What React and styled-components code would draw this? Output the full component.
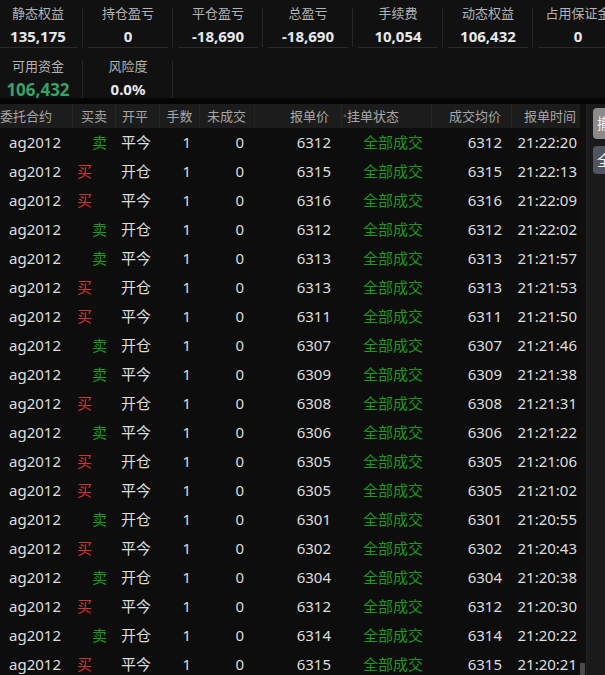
import React from 'react';
import styled, { createGlobalStyle, css } from 'styled-components';

const GlobalStyle = createGlobalStyle`
  html, body {
    margin: 0;
    padding: 0;
    background: #0c0c0c;
    overflow: hidden;
  }
  body {
    font-family: "Noto Sans", "Noto Sans CJK SC", sans-serif;
  }
`;

const GREEN = '#1f9a1f';
const RED = '#d4362f';

const COLUMNS = '73px 43px 44px 40px 55px 87px 90px 80px 68px';

const summaryTop = [
  { label: '静态权益', value: '135,175' },
  { label: '持仓盈亏', value: '0' },
  { label: '平仓盈亏', value: '-18,690' },
  { label: '总盈亏', value: '-18,690' },
  { label: '手续费', value: '10,054' },
  { label: '动态权益', value: '106,432' },
  { label: '占用保证金', value: '0' },
];

const summaryBottom = [
  { label: '可用资金', value: '106,432', accent: true },
  { label: '风险度', value: '0.0%' },
];

const orders = [
  [ 'sell', '平今', 6312, '21:22:20' ],
  [ 'buy', '开仓', 6315, '21:22:13' ],
  [ 'buy', '平今', 6316, '21:22:09' ],
  [ 'sell', '开仓', 6312, '21:22:02' ],
  [ 'sell', '平今', 6313, '21:21:57' ],
  [ 'buy', '开仓', 6313, '21:21:53' ],
  [ 'buy', '平今', 6311, '21:21:50' ],
  [ 'sell', '开仓', 6307, '21:21:46' ],
  [ 'sell', '平今', 6309, '21:21:38' ],
  [ 'buy', '开仓', 6308, '21:21:31' ],
  [ 'sell', '平今', 6306, '21:21:22' ],
  [ 'buy', '开仓', 6305, '21:21:06' ],
  [ 'buy', '平今', 6305, '21:21:02' ],
  [ 'sell', '开仓', 6301, '21:20:55' ],
  [ 'buy', '平今', 6302, '21:20:43' ],
  [ 'sell', '开仓', 6304, '21:20:38' ],
  [ 'buy', '平今', 6312, '21:20:30' ],
  [ 'sell', '开仓', 6314, '21:20:22' ],
  [ 'buy', '平今', 6315, '21:20:21' ],
];

const headers = [
  { text: '委托合约', align: 'left', pad: '0 0 0 0' },
  { text: '买卖', align: 'center', pad: '0' },
  { text: '开平', align: 'left', pad: '0 0 0 6px' },
  { text: '手数', align: 'center', pad: '0' },
  { text: '未成交', align: 'left', pad: '0 0 0 7px' },
  { text: '报单价', align: 'right', pad: '0 12px 0 0' },
  { text: '挂单状态', align: 'left', pad: '0 0 0 5px', sort: true },
  { text: '成交均价', align: 'right', pad: '0 10px 0 0' },
  { text: '报单时间', align: 'right', pad: '0 4px 0 0' },
];

export default function App () {
  return (
    <>
      <GlobalStyle />
      <Page>
        <Summary>
          <SummaryRow top>
            { summaryTop.map( item => (
              <Stat key={ item.label } top>
                <StatLabel top>{ item.label }</StatLabel>
                <StatValue top>{ item.value }</StatValue>
              </Stat>
            ) ) }
          </SummaryRow>
          <SummaryRow>
            { summaryBottom.map( item => (
              <Stat key={ item.label }>
                <StatLabel>{ item.label }</StatLabel>
                <StatValue accent={ item.accent }>{ item.value }</StatValue>
              </Stat>
            ) ) }
          </SummaryRow>
        </Summary>

        <Band />

        <Main>
          <Table>
            <HeadRow>
              { headers.map( h => (
                <HeadCell key={ h.text } align={ h.align } pad={ h.pad }>
                  { h.sort && <SortMark /> }
                  { h.text }
                </HeadCell>
              ) ) }
            </HeadRow>
            { orders.map( ( [ side, offset, price, time ], i ) => (
              <Row key={ i }>
                <Cell align='left' pad='0 0 0 9px'>ag2012</Cell>
                { side === 'buy'
                  ? <Cell align='left' pad='0 0 0 4px' color={ RED }>买</Cell>
                  : <Cell align='right' pad='0 9px 0 0' color={ GREEN }>卖</Cell> }
                <Cell align='left' pad='0 0 0 5px'>{ offset }</Cell>
                <Cell align='right' pad='0 9px 0 0'>1</Cell>
                <Cell align='right' pad='0 11px 0 0'>0</Cell>
                <Cell align='right' pad='0 11px 0 0'>{ price }</Cell>
                <Cell align='left' pad='0 0 0 21px' color={ GREEN }>全部成交</Cell>
                <Cell align='right' pad='0 10px 0 0'>{ price }</Cell>
                <Cell align='right' pad='0 3px 0 0'>{ time }</Cell>
              </Row>
            ) ) }
          </Table>

          <ScrollTrack>
            <Thumb />
          </ScrollTrack>

          <SidePanel>
            <SideButton variant='light'>撤单</SideButton>
            <SideButton variant='dark'>全撤</SideButton>
          </SidePanel>
        </Main>
      </Page>
    </>
  );
}

const Page = styled.div`
  width: 605px;
  height: 675px;
  display: flex;
  flex-direction: column;
  overflow: hidden;
  background: #0c0c0c;
`;

const Summary = styled.div`
  height: 98px;
  background: #111111;
  overflow: hidden;
  display: flex;
  flex-direction: column;
`;

const SummaryRow = styled.div`
  display: flex;
  height: ${ props => props.top ? 53 : 45 }px;
  margin-left: -7px;
`;

const Stat = styled.div`
  position: relative;
  flex: 0 0 90px;
  display: flex;
  flex-direction: column;
  align-items: center;

  &::after {
    content: '';
    position: absolute;
    right: 0;
    top: ${ props => props.top ? 8 : 7 }px;
    height: ${ props => props.top ? 39 : 38 }px;
    width: 1px;
    background: #262626;
  }
`;

const StatLabel = styled.div`
  margin-top: 3px;
  line-height: 20px;
  font-size: 13px;
  color: #b4b4b4;
  white-space: nowrap;
`;

const StatValue = styled.div`
  align-self: stretch;
  text-align: center;
  font-weight: 700;
  white-space: nowrap;
  color: ${ props => props.accent ? '#3aa267' : '#e6e8ec' };
  ${ props => props.top ? css`
    margin: 3px 5px 0;
    line-height: 21px;
    font-size: 15px;
    border-bottom: 1px solid #2a2a2a;
  ` : css`
    margin-top: 2px;
    line-height: 23px;
    font-size: ${ props.accent ? 17 : 15 }px;
  ` }
`;

const Band = styled.div`
  height: 6px;
  background: #050505;
`;

const Main = styled.div`
  flex: 1;
  display: flex;
  min-height: 0;
`;

const Table = styled.div`
  width: 580px;
  flex-shrink: 0;
  overflow: hidden;
  background: #0d0d0d;
`;

const gridRow = css`
  display: grid;
  grid-template-columns: ${ COLUMNS };
  align-items: center;
`;

const HeadRow = styled.div`
  ${ gridRow }
  height: 24px;
  background: #1c1c1c;
`;

const HeadCell = styled.div`
  position: relative;
  height: 100%;
  line-height: 24px;
  font-size: 13px;
  color: #a6a6a6;
  white-space: nowrap;
  overflow: hidden;
  text-align: ${ props => props.align };
  padding: ${ props => props.pad };
  border-right: 1px solid #262626;

  &:last-child {
    border-right: none;
  }
`;

const SortMark = styled.span`
  position: absolute;
  left: 1px;
  top: 10px;
  width: 0;
  height: 0;
  border-left: 2px solid transparent;
  border-right: 2px solid transparent;
  border-bottom: 3px solid #555;
`;

const Row = styled.div`
  ${ gridRow }
  height: 29px;
`;

const Cell = styled.div`
  line-height: 29px;
  font-size: 15px;
  white-space: nowrap;
  overflow: hidden;
  text-align: ${ props => props.align };
  padding: ${ props => props.pad };
  color: ${ props => props.color || '#dedede' };
`;

const ScrollTrack = styled.div`
  width: 6px;
  flex-shrink: 0;
  background: #0f0f0f;
  display: flex;
  flex-direction: column;
  justify-content: flex-end;
`;

const Thumb = styled.div`
  height: 12px;
  margin: 0 1px 0 0;
  background: #4a4a4a;
  border-radius: 1px;
`;

const SidePanel = styled.div`
  flex: 1;
  background: #1a1a1a;
  border-left: 1px solid #222;
  overflow: hidden;
  display: flex;
  flex-direction: column;
  gap: 7px;
  padding: 4px 0 0 6px;
`;

const SideButton = styled.div`
  width: 34px;
  flex-shrink: 0;
  height: ${ props => props.variant === 'light' ? 31 : 28 }px;
  line-height: ${ props => props.variant === 'light' ? 31 : 28 }px;
  padding-left: 4px;
  border-radius: 4px;
  font-size: 15px;
  color: #f2f2f2;
  white-space: nowrap;
  background: ${ props => props.variant === 'light' ? '#8a8a8a' : '#4f545e' };
`;
